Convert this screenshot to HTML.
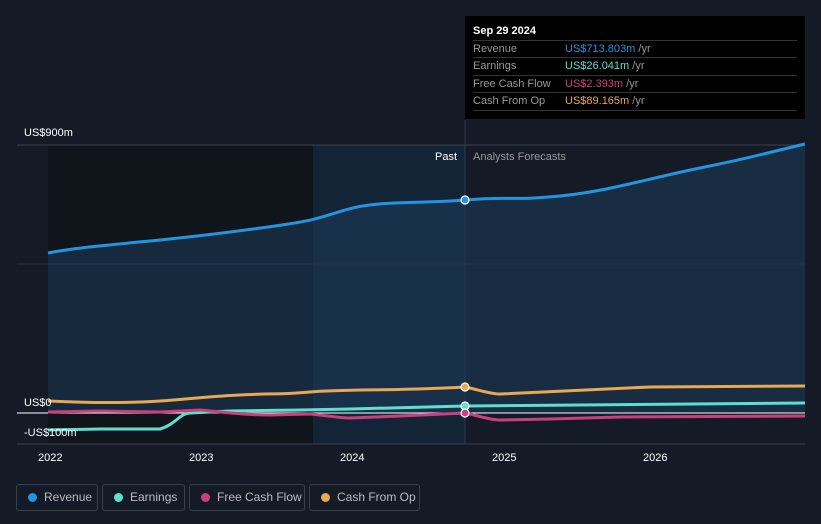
<!DOCTYPE html>
<html><head><meta charset="utf-8"><style>
html,body{margin:0;background:#151b26;width:821px;height:524px;overflow:hidden;font-family:"Liberation Sans",sans-serif;position:relative}
.tt{position:absolute;left:465px;top:16px;width:340px;height:103px;background:#000;color:#fff;font-size:11px}
.tt .h{position:absolute;left:8px;top:9px;font-weight:bold}
.tt .r{position:absolute;left:8px;width:324px;border-top:1px solid #333;height:17px;line-height:17px;color:#999}
.tt .r span{position:absolute;left:92px}
.tt .r i{font-style:normal;color:#999}
.lg{position:absolute;top:484px;height:27px;border:1px solid #3a404c;border-radius:3px;color:#bbb;font-size:12px;line-height:25px;box-sizing:border-box;padding-left:27px;white-space:nowrap}
.lg b{position:absolute;left:11px;top:8px;width:9px;height:9px;border-radius:50%}
</style></head><body>
<svg width="821" height="524" style="position:absolute;left:0;top:0">
<rect x="48" y="145" width="265" height="299" fill="#10141b"/>
<rect x="313" y="145" width="152" height="299" fill="#142437"/>
<line x1="17" y1="145" x2="805" y2="145" stroke="#3a404c"/>
<line x1="17" y1="264" x2="805" y2="264" stroke="#2a303c"/>
<line x1="465" y1="120" x2="465" y2="444" stroke="#2a3a50"/>
<path d="M48,253 C80,247 120,244 160,240 S240,231 275,226 S313,220 345,210 S420,204 465,200 S510,201 560,196 S650,178 700,168 S750,157 805,144 L805,413 L48,413Z" fill="#1b3a5a" opacity=".55"/>
<line x1="17" y1="413" x2="805" y2="413" stroke="#fff"/>
<line x1="17" y1="444" x2="805" y2="444" stroke="#3a404c"/>
<path d="M48,253 C80,247 120,244 160,240 S240,231 275,226 S313,220 345,210 S420,204 465,200 S510,201 560,196 S650,178 700,168 S750,157 805,144" fill="none" stroke="#2394e0" stroke-width="3"/>
<path d="M48,401 C90,403 130,403 160,401 S200,397 240,395 S275,395 310,392 S400,391 465,387 C480,390 490,394 500,394 S600,389 650,387 L805,386" fill="none" stroke="#e8a854" stroke-width="3"/>
<path d="M48,430 L100,429 L160,429 C175,425 180,413 190,413 L230,411 L300,410 L350,409 L465,406 L805,403" fill="none" stroke="#5fe0cc" stroke-width="3"/>
<path d="M48,412 L100,411 L160,412 L200,410 C230,413 250,415 270,415 L310,414 C330,416 340,418 350,418 L400,416 L465,413 C480,416 490,420 500,420 L550,419 L620,417 L805,416" fill="none" stroke="#c8407e" stroke-width="3"/>
<circle cx="465" cy="200" r="4" fill="#2394e0" stroke="#fff" stroke-width="1.2"/>
<circle cx="465" cy="387" r="4" fill="#e8a854" stroke="#fff" stroke-width="1.2"/>
<circle cx="465" cy="406" r="4" fill="#5fe0cc" stroke="#fff" stroke-width="1.2"/>
<circle cx="465" cy="413" r="4" fill="#c8407e" stroke="#fff" stroke-width="1.2"/>
<g font-family="Liberation Sans" font-size="11" fill="#fff">
<text x="24" y="136">US$900m</text><text x="24" y="406">US$0</text><text x="24" y="436">-US$100m</text>
<text x="457" y="160" text-anchor="end">Past</text><text x="473" y="160" fill="#999">Analysts Forecasts</text>
<text x="38" y="461">2022</text><text x="189" y="461">2023</text><text x="340" y="461">2024</text><text x="492" y="461">2025</text><text x="643" y="461">2026</text>
</g></svg>
<div class="tt"><div class="h">Sep 29 2024</div>
<div class="r" style="top:24px">Revenue<span style="color:#2394e0">US$713.803m <i>/yr</i></span></div>
<div class="r" style="top:41px">Earnings<span style="color:#5fe0cc">US$26.041m <i>/yr</i></span></div>
<div class="r" style="top:59px">Free Cash Flow<span style="color:#c8407e">US$2.393m <i>/yr</i></span></div>
<div class="r" style="top:76px;border-bottom:1px solid #333">Cash From Op<span style="color:#e8a854">US$89.165m <i>/yr</i></span></div>
</div>
<div class="lg" style="left:16px;width:82px"><b style="background:#2394e0"></b>Revenue</div>
<div class="lg" style="left:102px;width:83px"><b style="background:#5fe0cc"></b>Earnings</div>
<div class="lg" style="left:189px;width:116px"><b style="background:#c8407e"></b>Free Cash Flow</div>
<div class="lg" style="left:309px;width:111px"><b style="background:#e8a854"></b>Cash From Op</div>
</body></html>
